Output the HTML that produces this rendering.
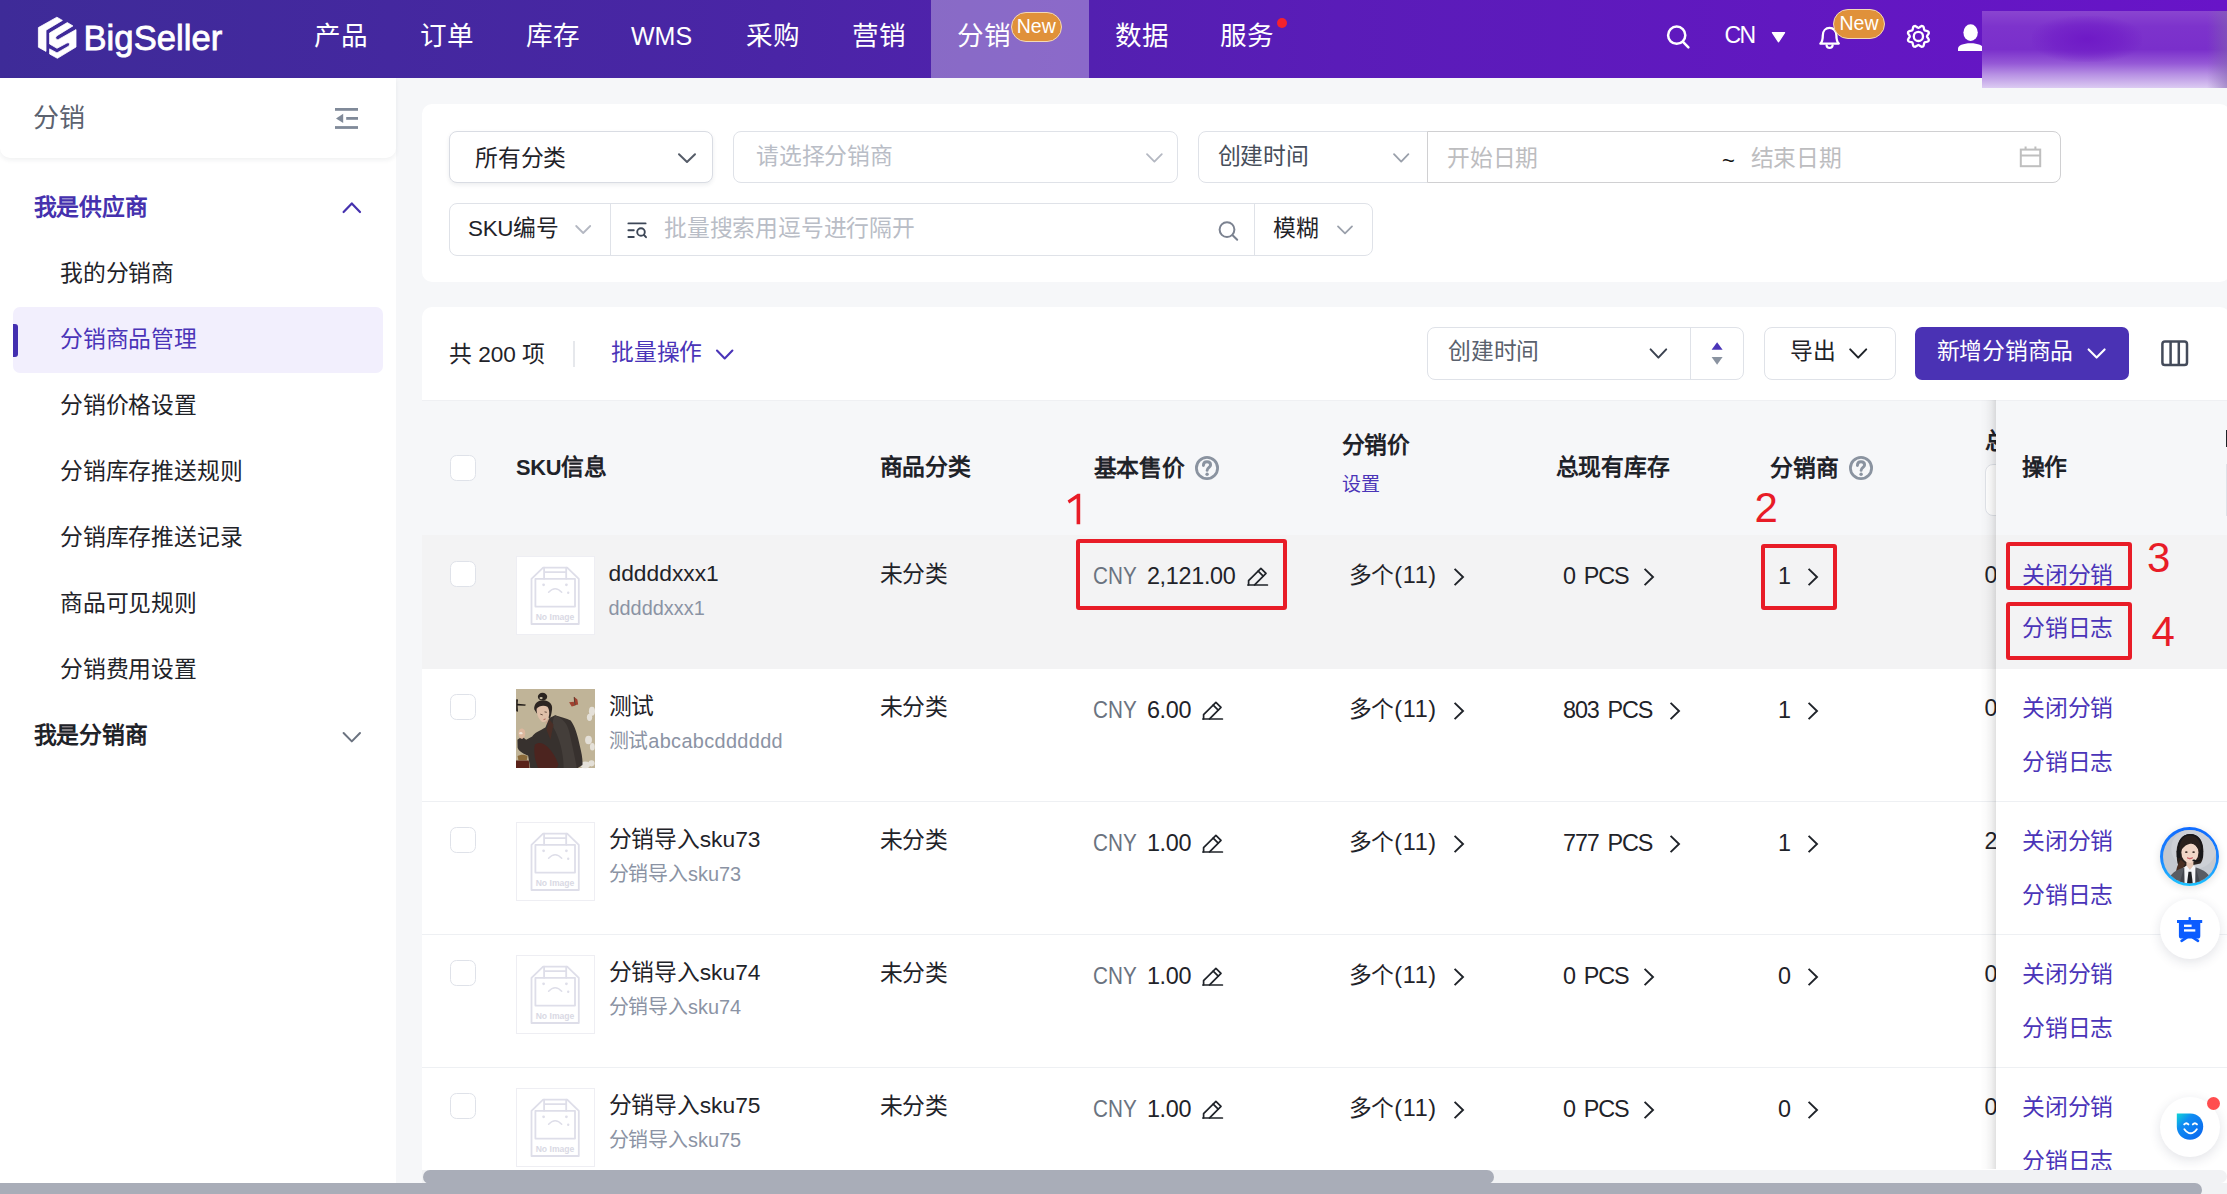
<!DOCTYPE html>
<html lang="zh-CN">
<head>
<meta charset="utf-8">
<title>BigSeller</title>
<style>
html,body{margin:0;padding:0}
body{width:2227px;height:1194px;overflow:hidden;position:relative;background:#f6f7f9;font-family:"Liberation Sans",sans-serif;color:#1f2329;font-size:22.8px}
.a{position:absolute}
.t{position:absolute;white-space:nowrap;line-height:1;font-size:22.8px}
.b{font-weight:bold}
i{display:inline-block;width:1em;text-align:center;font-style:normal}
svg{position:absolute;overflow:visible}
/* header */
#hd{left:0;top:0;width:2227px;height:78px;background:linear-gradient(90deg,#3e2b98 0%,#4a25a6 35%,#5a1cb8 60%,#6814c8 100%)}
#hd .n{color:#fff;font-size:26.6px;top:22.7px}
.badge{position:absolute;background:#e0913a;border:1.5px solid #f3d9b8;border-radius:16px;color:#fff;font-size:19.5px;line-height:27px;text-align:center;box-sizing:border-box}
/* sidebar */
#sb{left:0;top:78px;width:396px;height:1105px;background:#fff}
#sbt{left:0;top:0;width:396px;height:80px;background:#fff;border-radius:0 0 10px 10px;box-shadow:0 2px 5px rgba(30,40,60,.07)}
.mi{left:60px;color:#1f2329}
/* cards */
.card{background:#fff;border-radius:10px}
.box{position:absolute;box-sizing:border-box;border:1.5px solid #dfe2e8;border-radius:8px;background:#fff}
.ph{color:#b9bdc6}
.lnk{color:#4a34b8}
.sub{color:#8b93a4;font-size:19.9px}
.cny{color:#6b7380}
.cb{position:absolute;width:26px;height:26px;box-sizing:border-box;border:1.4px solid #dfe2e9;border-radius:6.5px;background:#fff}
.thumb{position:absolute;width:79px;height:79px;background:#fff;box-sizing:border-box;border:1px solid #eeeef3}
.rl{position:absolute;left:422px;width:1805px;height:1.5px;background:#eef0f3}
.red{position:absolute;box-sizing:border-box;border:4px solid #e81c27;border-radius:3px}
.lat{font-size:23.4px;letter-spacing:-.3px}
.lat2{font-size:23.4px;letter-spacing:.7px}
.cnyx{transform:scaleX(.885);transform-origin:0 50%;letter-spacing:0}
.pcs{letter-spacing:-1.1px;word-spacing:3.4px}
.rn{position:absolute;color:#e81c27;font-size:42px;line-height:1;white-space:nowrap}
</style>
</head>
<body>
<div id="hd" class="a">
  <!-- active tab -->
  <div class="a" style="left:931px;top:0;width:158px;height:78px;background:rgba(255,255,255,.33)"></div>
  <!-- logo -->
  <svg style="left:0;top:0" width="240" height="78" viewBox="0 0 240 78">
    <g fill="#fff" stroke="#fff" stroke-width="0.8" stroke-linejoin="round">
      <path d="M56.9,17.2 L62.4,20.4 L46.0,30.2 L46.0,51.4 L38.4,47.2 L38.4,27.6 Z"/>
      <path d="M67.3,22.6 L72.9,25.9 L56.6,35.9 Q55.0,37.4 56.0,38.9 Q57.0,40.2 58.6,39.4 L76.0,29.6 L76.0,47.0 L57.4,58.3 L49.6,54.0 L49.6,48.9 L57.0,52.9 L68.6,46.2 Q70.2,45.0 69.4,43.6 Q68.4,42.2 66.9,43.0 L57.0,48.3 L49.6,44.0 L49.6,33.0 Z"/>
    </g>
  </svg>
  <div class="t" id="logo" style="left:83.5px;top:20.5px;font-size:34.6px;color:#fff;letter-spacing:0.05px;-webkit-text-stroke:0.8px #fff">BigSeller</div>
  <!-- nav -->
  <div class="t n" style="left:314px"><i>产</i><i>品</i></div>
  <div class="t n" style="left:420px"><i>订</i><i>单</i></div>
  <div class="t n" style="left:526px"><i>库</i><i>存</i></div>
  <div class="t n" style="left:631px;font-size:25px;top:23.5px">WMS</div>
  <div class="t n" style="left:746px"><i>采</i><i>购</i></div>
  <div class="t n" style="left:852px"><i>营</i><i>销</i></div>
  <div class="t n" style="left:957px"><i>分</i><i>销</i></div>
  <div class="badge" style="left:1010.5px;top:12px;width:51.5px;height:30px">New</div>
  <div class="t n" style="left:1115px"><i>数</i><i>据</i></div>
  <div class="t n" style="left:1220px"><i>服</i><i>务</i></div>
  <div class="a" style="left:1277px;top:18px;width:10px;height:10px;border-radius:50%;background:#f5222d"></div>
  <!-- right icons -->
  <svg style="left:1660px;top:20px" width="40" height="36" viewBox="1660 20 40 36" fill="none" stroke="#fff" stroke-width="2.5" stroke-linecap="round">
    <circle cx="1676.7" cy="35.2" r="8.6"/><path d="M1683,41.8 L1688.4,47.4"/>
  </svg>
  <div class="t" style="left:1724.4px;top:24.2px;font-size:23px;color:#fff;letter-spacing:-1.6px">CN</div>
  <svg style="left:1770px;top:30px" width="18" height="14" viewBox="1770 30 18 14"><path d="M1772.4,32.6 L1784.6,32.6 L1778.5,41.8 Z" fill="#fff" stroke="#fff" stroke-width="1.2" stroke-linejoin="round"/></svg>
  <svg style="left:1816px;top:24px" width="28" height="28" viewBox="1816 24 28 28" fill="none" stroke="#fff" stroke-width="2.3" stroke-linejoin="round" stroke-linecap="round">
    <path d="M1820.4,43.6 L1838.8,43.6 C1836.6,41.4 1836.4,39.6 1836.4,35.4 C1836.4,30.8 1833.4,27.9 1829.6,27.9 C1825.8,27.9 1822.8,30.8 1822.8,35.4 C1822.8,39.6 1822.6,41.4 1820.4,43.6 Z"/>
    <path d="M1826.6,45.4 C1827,47.2 1828.2,47.8 1829.6,47.8 C1831,47.8 1832.2,47.2 1832.6,45.4"/>
  </svg>
  <div class="badge" style="left:1833px;top:9px;width:52px;height:29.5px">New</div>
  <svg style="left:1904px;top:22px" width="30" height="30" viewBox="1904 22 30 30" fill="none" stroke="#fff" stroke-width="2.3" stroke-linejoin="round">
    <circle cx="1918.4" cy="36.4" r="4.6"/>
    <path d="M1928.7,40.7 L1927.9,41.5 L1926.6,41.9 L1925.3,42.1 L1924.5,42.5 L1924.1,43.3 L1923.9,44.6 L1923.5,45.9 L1922.7,46.7 L1921.5,46.8 L1920.3,46.1 L1919.3,45.3 L1918.4,45.0 L1917.5,45.3 L1916.5,46.1 L1915.3,46.8 L1914.1,46.7 L1913.3,45.9 L1912.9,44.6 L1912.7,43.3 L1912.3,42.5 L1911.5,42.1 L1910.2,41.9 L1908.9,41.5 L1908.1,40.7 L1908.0,39.5 L1908.7,38.3 L1909.5,37.3 L1909.8,36.4 L1909.5,35.5 L1908.7,34.5 L1908.0,33.3 L1908.1,32.1 L1908.9,31.3 L1910.2,30.9 L1911.5,30.7 L1912.3,30.3 L1912.7,29.5 L1912.9,28.2 L1913.3,26.9 L1914.1,26.1 L1915.3,26.0 L1916.5,26.7 L1917.5,27.5 L1918.4,27.8 L1919.3,27.5 L1920.3,26.7 L1921.5,26.0 L1922.7,26.1 L1923.5,26.9 L1923.9,28.2 L1924.1,29.5 L1924.5,30.3 L1925.3,30.7 L1926.6,30.9 L1927.9,31.3 L1928.7,32.1 L1928.8,33.3 L1928.1,34.5 L1927.3,35.5 L1927.0,36.4 L1927.3,37.3 L1928.1,38.3 L1928.8,39.5 L1928.7,40.7 Z"/>
  </svg>
  <svg style="left:1954px;top:22px" width="32" height="32" viewBox="1954 22 32 32" fill="#fff">
    <ellipse cx="1970.6" cy="32.6" rx="7.2" ry="8.4"/>
    <path d="M1958,51 L1958,48.6 C1958,45.6 1963,43.2 1970.6,43.2 C1978.2,43.2 1983.2,45.6 1983.2,48.6 L1983.2,51 Z"/>
  </svg>
</div>
<!-- blurred patch -->
<div class="a" style="left:1982px;top:11px;width:245px;height:77px;overflow:hidden;background:linear-gradient(180deg,#8a45d0 0%,#7d33cc 20%,#7a2fcb 50%,#9558d6 68%,#b68fe3 82%,#dccbf2 100%)">
  <div class="a" style="left:50px;top:5px;width:110px;height:46px;background:radial-gradient(ellipse at center,rgba(110,24,198,.95) 0%,rgba(110,24,198,.5) 45%,rgba(110,24,198,0) 75%)"></div>
  <div class="a" style="left:225px;top:0;width:20px;height:77px;background:linear-gradient(90deg,rgba(120,90,170,0),rgba(130,100,175,.55))"></div>
</div>

<div id="sb" class="a">
  <div id="sbt" class="a"></div>
  <div class="t" style="left:33px;top:26.6px;font-size:26px;color:#5c6370"><i>分</i><i>销</i></div>
  <svg style="left:332px;top:26px" width="30" height="28" viewBox="332 104 30 28" fill="#808a99">
    <rect x="335" y="108" width="23" height="2.8"/><rect x="346.2" y="117" width="11.8" height="2.8"/><rect x="335" y="126.1" width="23" height="2.8"/>
    <path d="M336,118.4 L343.2,113.8 L343.2,123 Z"/>
  </svg>
  <div class="t b" style="left:33.5px;top:117.5px;color:#4531ae"><i>我</i><i>是</i><i>供</i><i>应</i><i>商</i></div>
  <svg style="left:340px;top:120px" width="24" height="18" viewBox="340 198 24 18" fill="none" stroke="#4531ae" stroke-width="2.2" stroke-linecap="round" stroke-linejoin="round"><path d="M343.6,212 L351.8,203.4 L360,212"/></svg>
  <div class="t mi" style="top:184px"><i>我</i><i>的</i><i>分</i><i>销</i><i>商</i></div>
  <div class="a" style="left:13px;top:229px;width:370px;height:66px;border-radius:7px;background:#f2effd"></div>
  <div class="a" style="left:13px;top:245.5px;width:4.6px;height:33.5px;border-radius:0 3px 3px 0;background:#432fb0"></div>
  <div class="t mi" style="top:250px;color:#4a34b8"><i>分</i><i>销</i><i>商</i><i>品</i><i>管</i><i>理</i></div>
  <div class="t mi" style="top:316px"><i>分</i><i>销</i><i>价</i><i>格</i><i>设</i><i>置</i></div>
  <div class="t mi" style="top:382px"><i>分</i><i>销</i><i>库</i><i>存</i><i>推</i><i>送</i><i>规</i><i>则</i></div>
  <div class="t mi" style="top:448px"><i>分</i><i>销</i><i>库</i><i>存</i><i>推</i><i>送</i><i>记</i><i>录</i></div>
  <div class="t mi" style="top:514px"><i>商</i><i>品</i><i>可</i><i>见</i><i>规</i><i>则</i></div>
  <div class="t mi" style="top:580px"><i>分</i><i>销</i><i>费</i><i>用</i><i>设</i><i>置</i></div>
  <div class="t b" style="left:33.5px;top:645.5px;color:#1f2329"><i>我</i><i>是</i><i>分</i><i>销</i><i>商</i></div>
  <svg style="left:340px;top:650px" width="24" height="18" viewBox="340 728 24 18" fill="none" stroke="#6b7380" stroke-width="2" stroke-linecap="round" stroke-linejoin="round"><path d="M343.6,733 L351.8,741.4 L360,733"/></svg>
</div>

<div class="a card" style="left:422px;top:104px;width:1808px;height:178px"></div>
<!-- row 1 -->
<div class="box" style="left:449px;top:131px;width:264px;height:52px;border-color:#d9dce3;box-shadow:0 2px 4px rgba(30,40,60,.08)"></div>
<div class="t" style="left:475px;top:146.5px"><i>所</i><i>有</i><i>分</i><i>类</i></div>
<svg style="left:676px;top:150px" width="22" height="16" viewBox="676 150 22 16" fill="none" stroke="#555c68" stroke-width="2" stroke-linecap="round" stroke-linejoin="round"><path d="M679,154.2 L687,162 L695,154.2"/></svg>
<div class="box" style="left:733px;top:131px;width:445px;height:52px"></div>
<div class="t ph" style="left:756px;top:145px"><i>请</i><i>选</i><i>择</i><i>分</i><i>销</i><i>商</i></div>
<svg style="left:1144px;top:150px" width="22" height="16" viewBox="1144 150 22 16" fill="none" stroke="#b4b8c2" stroke-width="1.8" stroke-linecap="round" stroke-linejoin="round"><path d="M1147,154.2 L1154.4,161.6 L1161.8,154.2"/></svg>
<div class="box" style="left:1198px;top:131px;width:230px;height:52px;border-radius:8px 0 0 8px"></div>
<div class="t" style="left:1217.5px;top:144.5px;color:#474e5a"><i>创</i><i>建</i><i>时</i><i>间</i></div>
<svg style="left:1391px;top:150px" width="22" height="16" viewBox="1391 150 22 16" fill="none" stroke="#9aa0ab" stroke-width="1.8" stroke-linecap="round" stroke-linejoin="round"><path d="M1394,154.2 L1401.2,161.6 L1408.4,154.2"/></svg>
<div class="box" style="left:1426.5px;top:131px;width:634.5px;height:52px;border-radius:0 8px 8px 0;border-color:#d0d0d2"></div>
<div class="t ph" style="left:1447px;top:146.5px;color:#bdbdbf"><i>开</i><i>始</i><i>日</i><i>期</i></div>
<div class="t" style="left:1722px;top:150px;color:#111;font-size:22px">~</div>
<div class="t ph" style="left:1750.5px;top:146.5px;color:#bdbdbf"><i>结</i><i>束</i><i>日</i><i>期</i></div>
<svg style="left:2018px;top:144px" width="26" height="26" viewBox="2018 144 26 26" fill="none" stroke="#bfbfbf" stroke-width="2"><rect x="2020.8" y="149.6" width="19.4" height="16.6"/><path d="M2020.8,155.4 L2040.2,155.4 M2025.6,146.4 L2025.6,150 M2035.4,146.4 L2035.4,150"/></svg>
<!-- row 2 -->
<div class="box" style="left:449px;top:203px;width:924px;height:53px"></div>
<div class="a" style="left:609.6px;top:204px;width:1.5px;height:51px;background:#dfe2e8"></div>
<div class="a" style="left:1253.6px;top:204px;width:1.5px;height:51px;background:#dfe2e8"></div>
<div class="t" style="left:468px;top:217px"><span style="font-size:22.4px;letter-spacing:-0.3px">SKU</span><i>编</i><i>号</i></div>
<svg style="left:573px;top:222px" width="20" height="14" viewBox="573 222 20 14" fill="none" stroke="#b4b8c2" stroke-width="1.8" stroke-linecap="round" stroke-linejoin="round"><path d="M576.2,226 L583.2,233 L590.2,226"/></svg>
<svg style="left:625px;top:220px" width="24" height="20" viewBox="625 220 24 20" fill="none" stroke="#3d4757" stroke-width="1.9" stroke-linecap="round"><path d="M628.4,223.4 L645.6,223.4 M628.4,230.2 L633.8,230.2 M628.4,237 L633.8,237"/><circle cx="641" cy="232" r="3.8"/><path d="M644,235 L646,237.2"/></svg>
<div class="t ph" style="left:664px;top:217px"><i>批</i><i>量</i><i>搜</i><i>索</i><i>用</i><i>逗</i><i>号</i><i>进</i><i>行</i><i>隔</i><i>开</i></div>
<svg style="left:1216px;top:219px" width="24" height="24" viewBox="1216 219 24 24" fill="none" stroke="#7b8290" stroke-width="2" stroke-linecap="round"><circle cx="1227" cy="229.6" r="7.4"/><path d="M1232.6,235.2 L1237.2,239.8"/></svg>
<div class="t" style="left:1273px;top:216.5px"><i>模</i><i>糊</i></div>
<svg style="left:1335px;top:222px" width="20" height="14" viewBox="1335 222 20 14" fill="none" stroke="#9aa0ab" stroke-width="1.8" stroke-linecap="round" stroke-linejoin="round"><path d="M1338,226.4 L1345,233.4 L1352,226.4"/></svg>

<svg width="0" height="0" style="left:0;top:0"><defs>
<symbol id="cr" viewBox="0 0 14 22"><path d="M2.6,2.9 L11,11 L2.6,19.1" fill="none" stroke="#1f2329" stroke-width="1.9" stroke-linecap="butt" stroke-linejoin="miter"/></symbol>
<symbol id="ed" viewBox="0 0 22 20"><g fill="none" stroke="#1f2329" stroke-width="1.7" stroke-linejoin="round" stroke-linecap="round"><path d="M0.9,18 L20.4,18"/><path d="M1.6,17.8 L1.6,13.6 L13.9,1.3 L19,6.4 L7.6,17.8"/><path d="M11.2,4.2 L16.2,9.2"/></g></symbol>
<symbol id="qm" viewBox="0 0 26 26"><circle cx="13" cy="13" r="10.6" fill="none" stroke="#8a93a0" stroke-width="2.8"/><path d="M9.4,10.6 C9.4,8 11,6.8 13,6.8 C15,6.8 16.6,8 16.6,10 C16.6,12.2 13.1,12.6 13.1,15.4" fill="none" stroke="#8a93a0" stroke-width="2.9" stroke-linecap="round"/><circle cx="13.1" cy="19.2" r="1.7" fill="#8a93a0"/></symbol>
<symbol id="ni" viewBox="0 0 78 78"><g fill="none" stroke="#dedee9" stroke-width="1.8" stroke-linejoin="round" stroke-linecap="round"><path d="M15.5,22.8 L27.1,11.7 L51.2,11.7 L62.8,22.8 L62.8,68 L15.5,68 Z"/><path d="M28.1,11.7 L28.1,22.8 M50.2,11.7 L50.2,22.8 M28.1,16.2 L50.2,16.2"/><rect x="19.4" y="22.8" width="39.6" height="27.8"/><path d="M32.6,36.3 Q39.2,29 45.7,36.3" stroke-width="1.5"/></g><g fill="#dedee9"><circle cx="27.6" cy="28.8" r="1.4"/><circle cx="50.4" cy="28.8" r="1.4"/><circle cx="52.2" cy="36.8" r="1.2"/></g><text x="39" y="63.5" font-family="Liberation Sans, sans-serif" font-weight="bold" font-size="8.6" fill="#d9d9e4" text-anchor="middle">No Image</text></symbol>
</defs></svg>
<div class="a card" style="left:422px;top:307px;width:1808px;height:900px;border-radius:10px 10px 0 0"></div>
<div class="t" style="left:449px;top:342.5px"><i>共</i> <span style="font-size:22.6px">200</span> <i>项</i></div>
<div class="a" style="left:573.4px;top:340.5px;width:1.5px;height:26.5px;background:#e6e8ec"></div>
<div class="t lnk" style="left:611px;top:341px"><i>批</i><i>量</i><i>操</i><i>作</i></div>
<svg style="left:713px;top:346px" width="24" height="16" viewBox="713 346 24 16" fill="none" stroke="#4a34b8" stroke-width="2.1" stroke-linecap="round" stroke-linejoin="round"><path d="M717,350.6 L724.7,358.4 L732.4,350.6"/></svg>
<div class="box" style="left:1427px;top:327px;width:317px;height:53px"></div>
<div class="a" style="left:1689.6px;top:328px;width:1.5px;height:51px;background:#dfe2e8"></div>
<div class="t" style="left:1448px;top:340px;color:#5a616d"><i>创</i><i>建</i><i>时</i><i>间</i></div>
<svg style="left:1647px;top:345px" width="24" height="16" viewBox="1647 345 24 16" fill="none" stroke="#3b4250" stroke-width="2" stroke-linecap="round" stroke-linejoin="round"><path d="M1650.6,349.4 L1658.4,357.6 L1666.2,349.4"/></svg>
<svg style="left:1708px;top:340px" width="18" height="28" viewBox="1708 340 18 28"><path d="M1717.1,342.2 L1722.6,349.8 L1711.6,349.8 Z" fill="#4a34b8"/><path d="M1717.1,364.8 L1722.6,357 L1711.6,357 Z" fill="#8a93a0"/></svg>
<div class="box" style="left:1764px;top:327px;width:132px;height:53px"></div>
<div class="t" style="left:1790px;top:340px"><i>导</i><i>出</i></div>
<svg style="left:1846px;top:345px" width="24" height="16" viewBox="1846 345 24 16" fill="none" stroke="#1f2329" stroke-width="2" stroke-linecap="round" stroke-linejoin="round"><path d="M1850.2,349.4 L1858.2,357.6 L1866.2,349.4"/></svg>
<div class="a" style="left:1915px;top:327px;width:214px;height:53px;border-radius:7px;background:#4a32b4"></div>
<div class="t" style="left:1936.5px;top:340px;color:#fff"><i>新</i><i>增</i><i>分</i><i>销</i><i>商</i><i>品</i></div>
<svg style="left:2085px;top:345px" width="24" height="16" viewBox="2085 345 24 16" fill="none" stroke="#fff" stroke-width="2.1" stroke-linecap="round" stroke-linejoin="round"><path d="M2088.6,349.4 L2096.6,357.6 L2104.6,349.4"/></svg>
<svg style="left:2159px;top:338px" width="32" height="30" viewBox="2159 338 32 30" fill="none" stroke="#444b5a" stroke-width="2.5"><rect x="2162.4" y="341.4" width="24.6" height="23.6" rx="2.6"/><path d="M2170.6,341.4 L2170.6,365 M2178.8,341.4 L2178.8,365"/></svg>
<div class="a" style="left:422px;top:400px;width:1805px;height:134.5px;background:#f6f7f9;border-top:1px solid #eff0f3;box-sizing:border-box"></div>
<div class="a" style="left:422px;top:534.5px;width:1805px;height:134px;background:#f3f3f4"></div>
<div class="rl" style="top:800.5px"></div>
<div class="rl" style="top:933.5px"></div>
<div class="rl" style="top:1066.5px"></div>
<div class="cb" style="left:450px;top:454.7px"></div>
<div class="t b" style="left:516px;top:456px"><span style="font-size:21.8px;letter-spacing:-.3px">SKU</span><i>信</i><i>息</i></div>
<div class="t b" style="left:879.5px;top:456px"><i>商</i><i>品</i><i>分</i><i>类</i></div>
<div class="t b" style="left:1093.5px;top:457px"><i>基</i><i>本</i><i>售</i><i>价</i></div>
<svg style="left:1194.3px;top:455.2px" width="26" height="26"><use href="#qm"/></svg>
<div class="t b" style="left:1341.5px;top:433.5px"><i>分</i><i>销</i><i>价</i></div>
<div class="t lnk" style="left:1341.5px;top:474.5px;font-size:19px"><i>设</i><i>置</i></div>
<div class="t b" style="left:1555.5px;top:455.5px"><i>总</i><i>现</i><i>有</i><i>库</i><i>存</i></div>
<div class="t b" style="left:1770px;top:456.5px"><i>分</i><i>销</i><i>商</i></div>
<svg style="left:1847.5px;top:455.4px" width="26" height="26"><use href="#qm"/></svg>
<div class="t b" style="left:1984.5px;top:430px"><i>总</i></div>
<div class="box" style="left:1984.5px;top:463.5px;width:60px;height:52px;border-radius:8px"></div>
<div class="cb" style="left:450px;top:560.9px"></div>
<div class="thumb" style="left:516px;top:555.6px"></div><svg style="left:516.4px;top:556.1px" width="78" height="78"><use href="#ni"/></svg>
<div class="t" style="left:608.5px;top:561.8px">dddddxxx1</div>
<div class="t sub" style="left:608.5px;top:598.8px">dddddxxx1</div>
<div class="t" style="left:879.5px;top:562.5px"><i>未</i><i>分</i><i>类</i></div>
<div class="t lat cny cnyx" style="left:1092.8px;top:565.0px">CNY</div><div class="t lat" style="left:1146.9px;top:565.0px">2,121.00</div>
<div class="t" style="left:1348.6px;top:564.1px"><i>多</i><i>个</i><span class="lat2">(11)</span></div>
<div class="t lat pcs" style="left:1563px;top:565.0px">0 PCS</div>
<div class="t lat" style="left:1778px;top:565.0px">1</div>
<div class="t lat" style="left:1984.5px;top:563.6px">0</div>
<div class="cb" style="left:450px;top:694.4px"></div>
<svg style="left:516px;top:689.2px" width="79" height="79" viewBox="0 0 78 78" preserveAspectRatio="none"><rect width="78" height="78" fill="#c0b498"/>
<path d="M0.2,10 L2,10.4 L1.6,14.6 L9.6,15.2 L9.2,16.6 L1.6,16.2 L2,22.4 L0.2,22 Z" fill="#1f1a17"/>
<g fill="#a0412f"><path d="M57.2,7.6 L60.6,10.4 L61.4,15.2 L58,16 Z"/><path d="M52.4,13 L57,12.6 L58,16.6 L55,17.2 Z"/></g>
<path d="M57.4,8 L58.2,16.4" stroke="#3a2a22" stroke-width="0.7"/>
<g fill="#eeece8" opacity=".8"><ellipse cx="75" cy="22" rx="3" ry="4.4"/><ellipse cx="72.6" cy="28" rx="2.6" ry="3.6"/><ellipse cx="71.6" cy="50.4" rx="3.4" ry="4.2"/><ellipse cx="75.4" cy="57" rx="2.4" ry="3.8"/><ellipse cx="68.4" cy="75" rx="4.6" ry="3.4"/><ellipse cx="74.6" cy="73.4" rx="3" ry="3"/></g>
<ellipse cx="26.2" cy="7.6" rx="4.6" ry="3.8" fill="#2a2420"/>
<ellipse cx="24.8" cy="9" rx="1.6" ry="1" fill="#c9bfa6"/>
<path d="M18,20 C17.6,14 22,11 27,11 C32,11 36.4,14.4 35.6,20 C35.2,23.6 34.6,26.4 33.6,29 L20.4,24 Z" fill="#2c2521"/>
<path d="M20.4,19.6 C22.6,16.4 27.6,15.4 31,17.6 C33,20 33.4,24.6 32,28.6 C30.6,32.2 27.2,33.4 25.2,32 C22.2,29.6 20,24 20.4,19.6 Z" fill="#dfbfa8"/>
<path d="M24,24.8 L26.4,25.6 M28.2,22.6 L30.4,23" stroke="#4a3428" stroke-width="0.8"/>
<path d="M27.2,30.2 L29.2,29.6" stroke="#a86054" stroke-width="0.9"/>
<path d="M29,33 L33.6,28.4 L38,33.4 L33,39 Z" fill="#c9a58e"/>
<path d="M33,28.6 L38.6,26 C44,28 50,29 54,31 C58,36 61,46 63,56 C65,64 66,70 65.6,75 L61,78 L14,78 L12,66 C8,64 3,62 1.6,58 L1.4,50 L6,47 L10,50 L16,47 C18,43 24,41 29,38 Z" fill="#37312e"/>
<path d="M38.6,26 C46,29 51,34 53,44 C55,54 58,66 60,78 L47,78 C47,66 44,50 37,38 C36,34 36,30 38.6,26 Z" fill="#443e3a"/>
<path d="M33,30 L37,35 L34,50 L30,40 Z" fill="#4a2e26"/>
<path d="M18.6,55 C22,52 27,53 31,57 C36,62 40,68 42,75 L40,78 L22,78 C19,72 17,62 18.6,55 Z" fill="#4c241f"/>
<path d="M2.6,41.6 C3.6,38.6 6.6,38 8.4,40.6 C10,43.6 9,47.6 6.6,49 C4,49.6 1.6,46 2.6,41.6 Z" fill="#dcb79e"/>
<ellipse cx="4.8" cy="43.6" rx="1.6" ry="1.2" fill="#f0e6da"/>
<path d="M1.6,66.4 C4,64.4 9,64.4 11.4,66.4 L10.6,70.4 L2.4,70.4 Z" fill="#8a6a3a"/>
<path d="M0,70.6 L12.6,70.6 L13.4,78 L0,78 Z" fill="#5a2219"/>
</svg>
<div class="t" style="left:608.5px;top:695.3px"><i>测</i><i>试</i></div>
<div class="t sub" style="left:608.5px;top:732.3px"><i>测</i><i>试</i><span style="letter-spacing:.35px">abcabcdddddd</span></div>
<div class="t" style="left:879.5px;top:696.0px"><i>未</i><i>分</i><i>类</i></div>
<div class="t lat cny cnyx" style="left:1092.8px;top:698.5px">CNY</div><div class="t lat" style="left:1146.9px;top:698.5px">6.00</div>
<div class="t" style="left:1348.6px;top:697.6px"><i>多</i><i>个</i><span class="lat2">(11)</span></div>
<div class="t lat pcs" style="left:1563px;top:698.5px">803 PCS</div>
<div class="t lat" style="left:1778px;top:698.5px">1</div>
<div class="t lat" style="left:1984.5px;top:697.1px">0</div>
<div class="cb" style="left:450px;top:827.4px"></div>
<div class="thumb" style="left:516px;top:821.5px"></div><svg style="left:516.4px;top:822.0px" width="78" height="78"><use href="#ni"/></svg>
<div class="t" style="left:608.5px;top:828.3px"><i>分</i><i>销</i><i>导</i><i>入</i>sku73</div>
<div class="t sub" style="left:608.5px;top:865.3px"><i>分</i><i>销</i><i>导</i><i>入</i>sku73</div>
<div class="t" style="left:879.5px;top:829.0px"><i>未</i><i>分</i><i>类</i></div>
<div class="t lat cny cnyx" style="left:1092.8px;top:831.5px">CNY</div><div class="t lat" style="left:1146.9px;top:831.5px">1.00</div>
<div class="t" style="left:1348.6px;top:830.6px"><i>多</i><i>个</i><span class="lat2">(11)</span></div>
<div class="t lat pcs" style="left:1563px;top:831.5px">777 PCS</div>
<div class="t lat" style="left:1778px;top:831.5px">1</div>
<div class="t lat" style="left:1984.5px;top:830.1px">2</div>
<div class="cb" style="left:450px;top:960.4px"></div>
<div class="thumb" style="left:516px;top:954.5px"></div><svg style="left:516.4px;top:955.0px" width="78" height="78"><use href="#ni"/></svg>
<div class="t" style="left:608.5px;top:961.3px"><i>分</i><i>销</i><i>导</i><i>入</i>sku74</div>
<div class="t sub" style="left:608.5px;top:998.3px"><i>分</i><i>销</i><i>导</i><i>入</i>sku74</div>
<div class="t" style="left:879.5px;top:962.0px"><i>未</i><i>分</i><i>类</i></div>
<div class="t lat cny cnyx" style="left:1092.8px;top:964.5px">CNY</div><div class="t lat" style="left:1146.9px;top:964.5px">1.00</div>
<div class="t" style="left:1348.6px;top:963.6px"><i>多</i><i>个</i><span class="lat2">(11)</span></div>
<div class="t lat pcs" style="left:1563px;top:964.5px">0 PCS</div>
<div class="t lat" style="left:1778px;top:964.5px">0</div>
<div class="t lat" style="left:1984.5px;top:963.1px">0</div>
<div class="cb" style="left:450px;top:1093.4px"></div>
<div class="thumb" style="left:516px;top:1087.5px"></div><svg style="left:516.4px;top:1088.0px" width="78" height="78"><use href="#ni"/></svg>
<div class="t" style="left:608.5px;top:1094.3px"><i>分</i><i>销</i><i>导</i><i>入</i>sku75</div>
<div class="t sub" style="left:608.5px;top:1131.3px"><i>分</i><i>销</i><i>导</i><i>入</i>sku75</div>
<div class="t" style="left:879.5px;top:1095.0px"><i>未</i><i>分</i><i>类</i></div>
<div class="t lat cny cnyx" style="left:1092.8px;top:1097.5px">CNY</div><div class="t lat" style="left:1146.9px;top:1097.5px">1.00</div>
<div class="t" style="left:1348.6px;top:1096.6px"><i>多</i><i>个</i><span class="lat2">(11)</span></div>
<div class="t lat pcs" style="left:1563px;top:1097.5px">0 PCS</div>
<div class="t lat" style="left:1778px;top:1097.5px">0</div>
<div class="t lat" style="left:1984.5px;top:1096.1px">0</div>
<svg style="left:1247.0px;top:567.2px" width="22" height="20"><use href="#ed"/></svg>
<svg style="left:1452.3px;top:566.3px" width="14" height="22"><use href="#cr"/></svg>
<svg style="left:1642.4px;top:566.3px" width="14" height="22"><use href="#cr"/></svg>
<svg style="left:1806.0px;top:566.3px" width="14" height="22"><use href="#cr"/></svg>
<svg style="left:1201.6px;top:700.7px" width="22" height="20"><use href="#ed"/></svg>
<svg style="left:1452.3px;top:699.8px" width="14" height="22"><use href="#cr"/></svg>
<svg style="left:1668.4px;top:699.8px" width="14" height="22"><use href="#cr"/></svg>
<svg style="left:1806.0px;top:699.8px" width="14" height="22"><use href="#cr"/></svg>
<svg style="left:1201.6px;top:833.7px" width="22" height="20"><use href="#ed"/></svg>
<svg style="left:1452.3px;top:832.8px" width="14" height="22"><use href="#cr"/></svg>
<svg style="left:1668.4px;top:832.8px" width="14" height="22"><use href="#cr"/></svg>
<svg style="left:1806.0px;top:832.8px" width="14" height="22"><use href="#cr"/></svg>
<svg style="left:1201.6px;top:966.7px" width="22" height="20"><use href="#ed"/></svg>
<svg style="left:1452.3px;top:965.8px" width="14" height="22"><use href="#cr"/></svg>
<svg style="left:1642.4px;top:965.8px" width="14" height="22"><use href="#cr"/></svg>
<svg style="left:1806.0px;top:965.8px" width="14" height="22"><use href="#cr"/></svg>
<svg style="left:1201.6px;top:1099.7px" width="22" height="20"><use href="#ed"/></svg>
<svg style="left:1452.3px;top:1098.8px" width="14" height="22"><use href="#cr"/></svg>
<svg style="left:1642.4px;top:1098.8px" width="14" height="22"><use href="#cr"/></svg>
<svg style="left:1806.0px;top:1098.8px" width="14" height="22"><use href="#cr"/></svg>
<div class="a" style="left:1996px;top:400px;width:231px;height:783px;background:#fff"></div>
<div class="a" style="left:1980px;top:400px;width:16px;height:769px;background:linear-gradient(90deg,rgba(0,0,0,0) 0%,rgba(0,0,0,.015) 35%,rgba(0,0,0,.05) 70%,rgba(0,0,0,.12) 100%)"></div>
<div class="a" style="left:1996px;top:400px;width:231px;height:134.5px;background:#f6f7f9;border-top:1px solid #eff0f3;box-sizing:border-box"></div>
<div class="a" style="left:1996px;top:534.5px;width:231px;height:134px;background:#f3f3f4"></div>
<div class="a" style="left:1996px;top:800.5px;width:231px;height:1.5px;background:#eef0f3"></div>
<div class="a" style="left:1996px;top:933.5px;width:231px;height:1.5px;background:#eef0f3"></div>
<div class="a" style="left:1996px;top:1066.5px;width:231px;height:1.5px;background:#eef0f3"></div>
<div class="t b" style="left:2021.5px;top:455.5px"><i>操</i><i>作</i></div>
<div class="t lnk" style="left:2022px;top:563.7px"><i>关</i><i>闭</i><i>分</i><i>销</i></div>
<div class="t lnk" style="left:2022px;top:617.2px"><i>分</i><i>销</i><i>日</i><i>志</i></div>
<div class="t lnk" style="left:2022px;top:697.2px"><i>关</i><i>闭</i><i>分</i><i>销</i></div>
<div class="t lnk" style="left:2022px;top:750.7px"><i>分</i><i>销</i><i>日</i><i>志</i></div>
<div class="t lnk" style="left:2022px;top:830.2px"><i>关</i><i>闭</i><i>分</i><i>销</i></div>
<div class="t lnk" style="left:2022px;top:883.7px"><i>分</i><i>销</i><i>日</i><i>志</i></div>
<div class="t lnk" style="left:2022px;top:963.2px"><i>关</i><i>闭</i><i>分</i><i>销</i></div>
<div class="t lnk" style="left:2022px;top:1016.7px"><i>分</i><i>销</i><i>日</i><i>志</i></div>
<div class="t lnk" style="left:2022px;top:1096.2px"><i>关</i><i>闭</i><i>分</i><i>销</i></div>
<div class="t lnk" style="left:2022px;top:1149.7px"><i>分</i><i>销</i><i>日</i><i>志</i></div>
<div class="a" style="left:2225.6px;top:430px;width:2px;height:17px;background:#1f2329"></div>
<div class="a" style="left:2225.6px;top:463.5px;width:3px;height:52px;background:#fff;border-left:1px solid #dfe2e8;box-sizing:border-box"></div>
<div class="red" style="left:1076.4px;top:539.3px;width:210.6px;height:70.6px"></div>
<div class="red" style="left:1761.3px;top:543.9px;width:76px;height:66px"></div>
<div class="red" style="left:2006px;top:542.3px;width:126px;height:47.6px"></div>
<div class="red" style="left:2006px;top:602.1px;width:126px;height:58.2px"></div>
<svg style="left:1064px;top:490px" width="20" height="38" viewBox="1064 490 20 38"><path d="M1080.2,524.3 L1076.6,524.3 L1076.6,498.6 L1069.2,503.4 L1067.6,500.6 L1077.6,493.8 L1080.2,493.8 Z" fill="#e81c27"/></svg>
<div class="rn" style="left:1754.5px;top:487px">2</div>
<div class="rn" style="left:2147px;top:536.9px">3</div>
<div class="rn" style="left:2151.5px;top:610.8px">4</div>
<!-- scrollbars -->
<div class="a" style="left:422px;top:1170px;width:1805px;height:13px;background:#f1f2f4;border-radius:0 7px 7px 0"></div>
<div class="a" style="left:423px;top:1169.5px;width:1070.5px;height:14px;background:#a9adb8;border-radius:7px"></div>
<div class="a" style="left:0;top:1182.6px;width:2227px;height:12px;background:#f1f2f4"></div>
<div class="a" style="left:-10px;top:1182.6px;width:2212px;height:14px;background:#a9adb8;border-radius:7px"></div>
<!-- floating buttons -->
<div class="a" style="left:2160px;top:827px;width:59px;height:59px;border-radius:50%;background:linear-gradient(180deg,#0f6bff 0%,#1a86ff 55%,#1cc4ff 100%);box-shadow:0 2px 8px rgba(0,0,0,.12)"></div>
<svg style="left:2162.8px;top:829.8px" width="53.4" height="53.4" viewBox="0 0 52 52">
  <defs><clipPath id="avc"><circle cx="26" cy="26" r="26"/></clipPath></defs>
  <g clip-path="url(#avc)">
    <rect width="52" height="52" fill="#c4c8cf"/>
    <ellipse cx="30" cy="18" rx="22" ry="20" fill="#cdd0d6"/>
    <path d="M13.4,26 C12,12 18,3.8 26.4,3.8 C35,3.8 40.4,11 39.2,24 C39,28 38,31 36.4,32.6 L16,37 C14,33 13.6,30 13.4,26 Z" fill="#2a211d"/>
    <path d="M17.4,29 C13,35 11.6,42 13.2,49 L19.6,47 C18.4,41 19.4,36 21.6,32.6 Z" fill="#4a2f22"/>
    <rect x="22.8" y="30" width="6.8" height="8" fill="#e6c6b4"/>
    <ellipse cx="26.2" cy="22" rx="8.3" ry="10.2" fill="#f1d6c6"/>
    <path d="M17.2,21 C17.6,12 22,8.6 27,8.6 C32.2,8.6 35.4,12.6 35.4,21 C33.4,16 30.4,13.6 27.8,13.4 C24,13.4 20,15.6 17.2,21 Z" fill="#2a211d"/>
    <ellipse cx="22.7" cy="21.6" rx="1.3" ry=".8" fill="#3a2a24"/><ellipse cx="29.8" cy="21.6" rx="1.3" ry=".8" fill="#3a2a24"/>
    <path d="M23.4,27 Q26.2,29.6 29,27 Q26.2,28.2 23.4,27 Z" fill="#c9545a" stroke="#c9545a" stroke-width=".6"/>
    <path d="M5,52 C6,42 13,39 21,36.4 L26.2,45 L31.4,36.4 C39.4,39 46.4,42 47.4,52 Z" fill="#595c63"/>
    <path d="M20.6,36.6 L22.8,34.6 L26.2,39 L29.6,34.6 L31.8,36.6 L31.6,52 L20.8,52 Z" fill="#f5f5f7"/>
    <path d="M24.8,40.6 L27.6,40.6 L29,52 L23.4,52 Z" fill="#1f2024"/>
    <path d="M20.6,36.6 L16,52 L20.8,52 Z M31.8,36.6 L36.4,52 L31.6,52 Z" fill="#44474e"/>
    <path d="M15.2,22 C14.2,10 20,4.6 26.4,4.6 C33,4.6 38.8,10 37.6,22" fill="none" stroke="#17171a" stroke-width="1.6"/>
    <rect x="13.4" y="19" width="3.6" height="8.4" rx="1.6" fill="#17171a"/><rect x="35.6" y="19" width="3.4" height="8.4" rx="1.6" fill="#17171a"/>
    <path d="M37.6,27 C36.4,30 33.4,30.8 30.2,29.8" fill="none" stroke="#17171a" stroke-width="1.3"/><ellipse cx="30.2" cy="29.7" rx="1.6" ry="1" fill="#17171a"/>
  </g>
</svg>
<div class="a" style="left:2160px;top:899px;width:60px;height:60px;border-radius:50%;background:#fff;box-shadow:0 3px 12px rgba(30,40,70,.13)"></div>
<svg style="left:2175px;top:915px" width="30" height="30" viewBox="2175 915 30 30" fill="#0b5cff">
  <path d="M2177,919.9 h25.2 v3.1 h-1.9 v12.9 q0,2.7 -2.7,2.7 h-16 q-2.7,0 -2.7,-2.7 v-12.9 h-1.9 z"/>
  <rect x="2188.5" y="917.1" width="2.4" height="3.4" rx="1"/>
  <path d="M2186.6,937.6 L2181.6,940.8 M2193,937.6 L2198,940.8" stroke="#0b5cff" stroke-width="2.6" stroke-linecap="round"/>
  <rect x="2184" y="924.6" width="7.6" height="2.3" fill="#fff"/><rect x="2184" y="929.3" width="11.3" height="2.3" fill="#fff"/>
</svg>
<div class="a" style="left:2160px;top:1097px;width:60px;height:60px;border-radius:50%;background:#fff;box-shadow:0 3px 12px rgba(30,40,70,.13)"></div>
<svg style="left:2175px;top:1112px" width="30" height="30" viewBox="2175 1112 30 30">
  <defs><linearGradient id="sm" x1="0" y1="0" x2="1" y2="1"><stop offset="0" stop-color="#10d4d6"/><stop offset=".32" stop-color="#0f8cf2"/><stop offset="1" stop-color="#0a62ee"/></linearGradient></defs>
  <path d="M2176.8,1113.6 L2190.4,1113.6 C2198,1113.6 2203.2,1119.4 2203.2,1126.6 C2203.2,1134 2197.6,1139.8 2190,1139.8 C2182.4,1139.8 2176.8,1134 2176.8,1126.6 Z" fill="url(#sm)"/>
  <g fill="none" stroke="#fff" stroke-width="1.9" stroke-linecap="round"><path d="M2184.2,1124.4 Q2186.3,1122 2188.4,1124.4"/><path d="M2192.8,1124.4 Q2194.9,1122 2197,1124.4"/><path d="M2184.4,1129.2 Q2190.6,1137.4 2196.8,1129.2"/></g>
</svg>
<div class="a" style="left:2207px;top:1097px;width:13px;height:13px;border-radius:50%;background:#ff4d4f"></div>

</body>
</html>
